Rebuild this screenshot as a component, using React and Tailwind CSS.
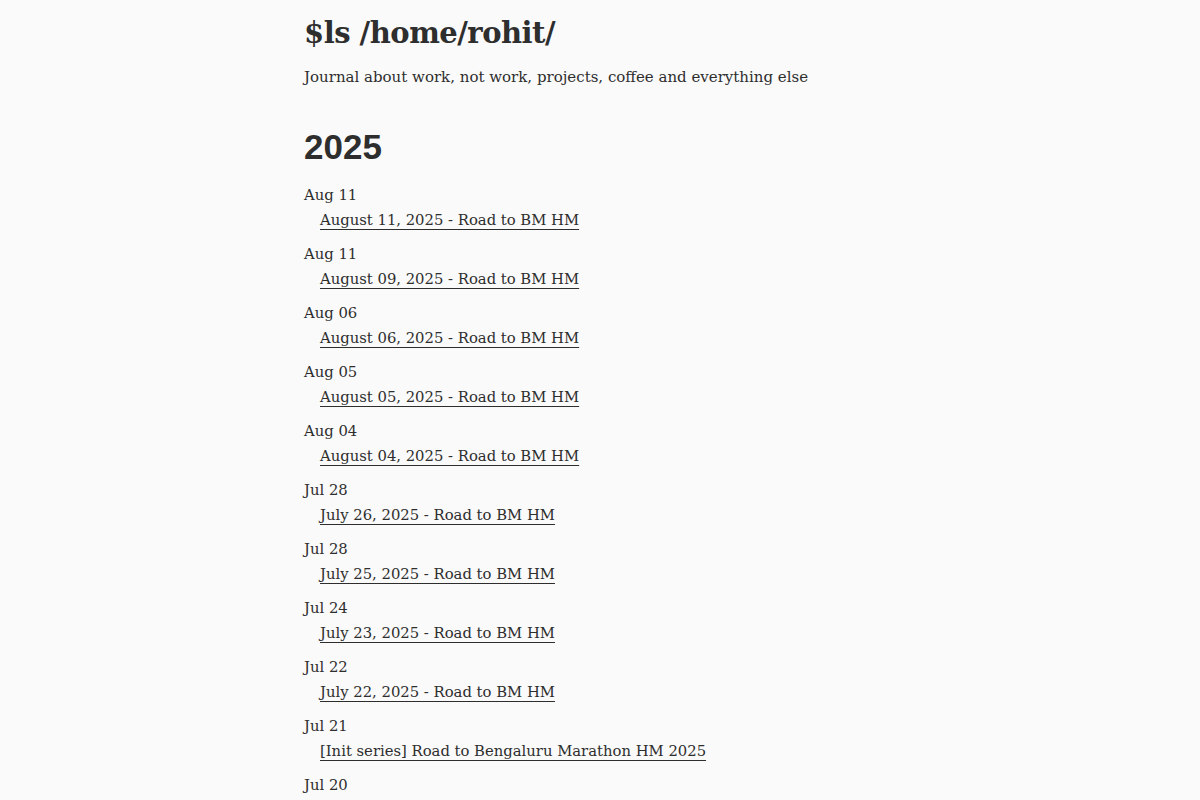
const posts = [
  { date: "Aug 11", title: "August 11, 2025 - Road to BM HM" },
  { date: "Aug 11", title: "August 09, 2025 - Road to BM HM" },
  { date: "Aug 06", title: "August 06, 2025 - Road to BM HM" },
  { date: "Aug 05", title: "August 05, 2025 - Road to BM HM" },
  { date: "Aug 04", title: "August 04, 2025 - Road to BM HM" },
  { date: "Jul 28", title: "July 26, 2025 - Road to BM HM" },
  { date: "Jul 28", title: "July 25, 2025 - Road to BM HM" },
  { date: "Jul 24", title: "July 23, 2025 - Road to BM HM" },
  { date: "Jul 22", title: "July 22, 2025 - Road to BM HM" },
  { date: "Jul 21", title: "[Init series] Road to Bengaluru Marathon HM 2025" },
  { date: "Jul 20", title: "July 20, 2025 - Road to BM HM" },
];

const PostRow = ({ date, title }) => {
  return (
    <li className="flex flex-col">
      <span className="leading-[25px]">{date}</span>
      <a
        href="#"
        className="pl-4 leading-[25px] underline underline-offset-4 decoration-1"
      >
        {title}
      </a>
    </li>
  );
};

const App = () => {
  return (
    <div className="min-h-screen w-full bg-[#fafafa] text-[#2e2e2e] font-['DejaVu_Serif',serif]">
      <div className="w-[592px] ml-[304px] pt-[14px]">
        <h1 className="text-[29px] font-bold leading-[38px] tracking-[-0.5px]">
          $ls /home/rohit/
        </h1>
        <p className="mt-[14px] text-[15px] leading-[22px]">
          Journal about work, not work, projects, coffee and everything else
        </p>
        <h2 className="mt-[37px] text-[35px] font-bold leading-[44px] font-['Liberation_Sans',sans-serif]">
          2025
        </h2>
        <ul className="mt-[13px] flex flex-col gap-[9px] text-[14.8px]">
          {posts.map((p, i) => (
            <PostRow key={i} date={p.date} title={p.title} />
          ))}
        </ul>
      </div>
    </div>
  );
};

export default App;
